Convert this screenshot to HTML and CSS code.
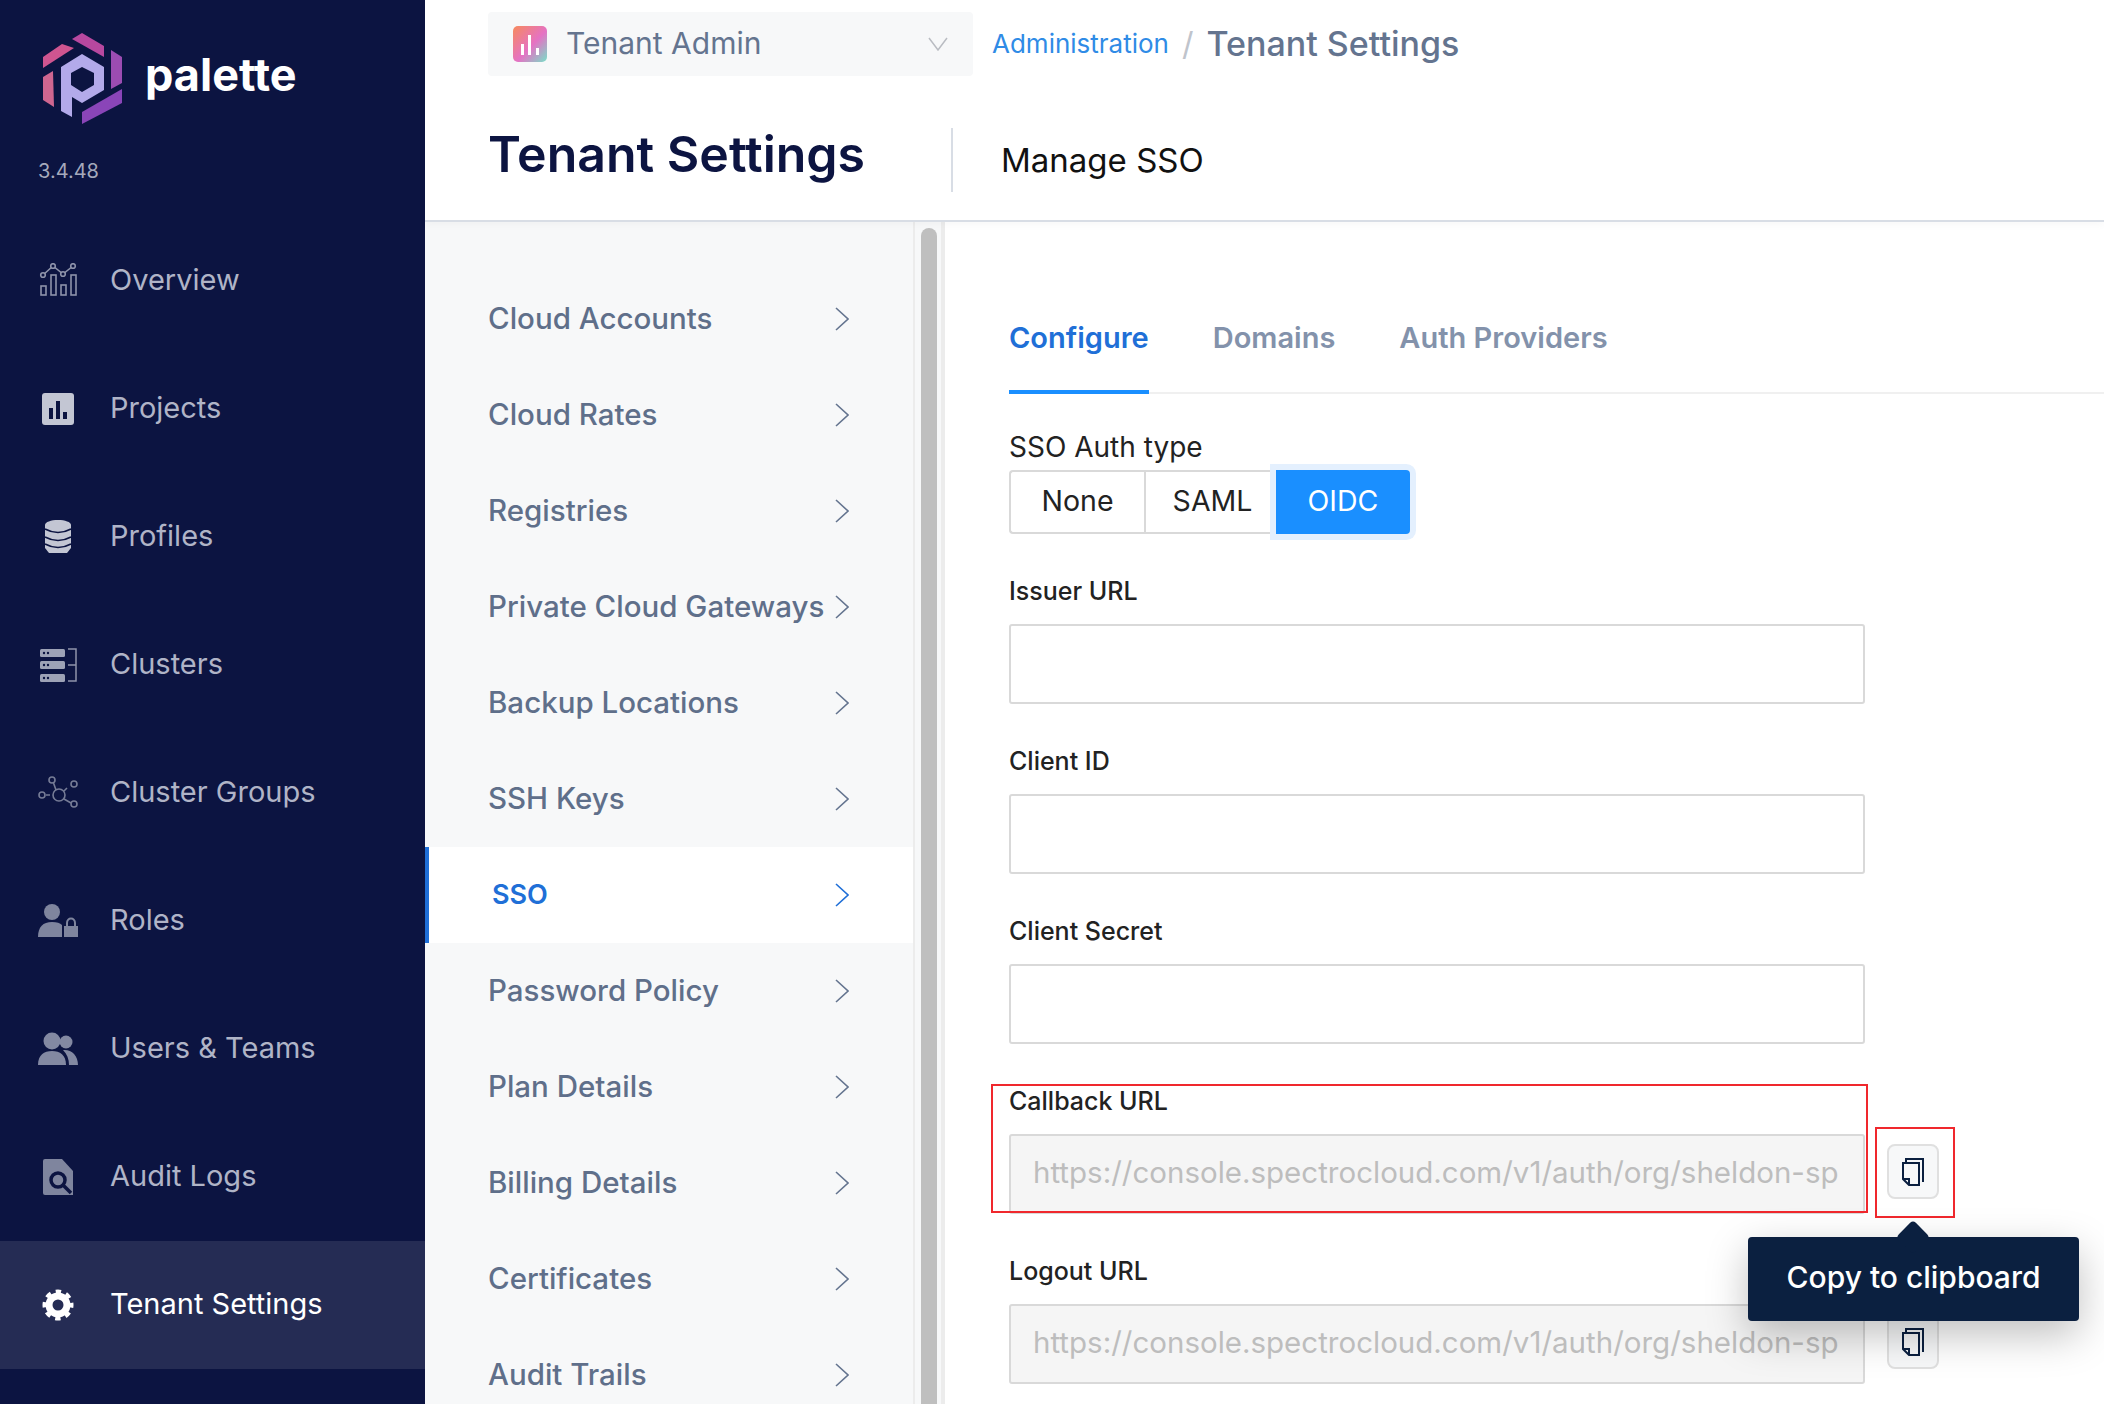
FILE: index.html
```html
<!DOCTYPE html>
<html lang="en">
<head>
    <meta charset="UTF-8">
    <title>Tenant Settings</title>
    <link rel="stylesheet" href="styles.css">
</head>
<body>
    <aside class="sidebar">
        <div class="brand">
            <div class="brand-row">
                <svg class="logo" viewBox="43 33 79 91">
                    <polygon fill="#cf5590" points="43,57 62,44 74,48 43,68"/>
                    <polygon fill="#b8489f" points="72,39 82,33 104,46 104,57"/>
                    <polygon fill="#9c4cb2" points="111,50 122,57 122,83 111,89"/>
                    <polygon fill="#8a45b8" points="122,89 122,103 82,124 82,112"/>
                    <polygon fill="#cf6690" points="53,71 43,77 43,100 54,107"/>
                    <path fill="#b3aaea" fill-rule="evenodd" d="M82 54 L104 67 V90 L82 103 L72 97 V117 L61 111 V67 Z M82 67 L71 73 V85 L82 92 L94 85 V73 Z"/>
                </svg>
                <span class="brand-name">palette</span>
            </div>
            <div class="version">3.4.48</div>
        </div>
        <nav>
            <a class="nav-item">
                <svg class="nav-icon" viewBox="0 0 40 36" fill="none" stroke="#8e93aa" stroke-width="1.6">
                    <rect x="3" y="23" width="5" height="9"/><rect x="13" y="12" width="5" height="20"/><rect x="23" y="22" width="5" height="10"/><rect x="33" y="12" width="5" height="20"/>
                    <path d="M5 12 L15 3 L25 11 L35 3"/>
                    <circle cx="5" cy="12" r="2.3" fill="#0c1441"/><circle cx="15" cy="3" r="2.3" fill="#0c1441"/><circle cx="25" cy="11" r="2.3" fill="#0c1441"/><circle cx="35" cy="3" r="2.3" fill="#0c1441"/>
                </svg>
                Overview
            </a>
            <a class="nav-item">
                <svg class="nav-icon" viewBox="0 0 40 36">
                    <rect x="4" y="2" width="32" height="32" rx="3" fill="#c3c6d3"/>
                    <rect x="11" y="17" width="4" height="11" fill="#0c1441"/><rect x="18" y="10" width="4" height="18" fill="#0c1441"/><rect x="25" y="21" width="4" height="7" fill="#0c1441"/>
                </svg>
                Projects
            </a>
            <a class="nav-item">
                <svg class="nav-icon" viewBox="0 0 40 36">
                    <path fill="#c3c6d3" d="M7 6 C7 3 13 1 20 1 C27 1 33 3 33 6 V29 L29 34 H11 L7 29 Z"/>
                    <path fill="none" stroke="#0c1441" stroke-width="1.6" d="M7 10 Q20 17 33 10 M7 18 Q20 25 33 18 M7 25 Q20 32 33 25"/>
                </svg>
                Profiles
            </a>
            <a class="nav-item">
                <svg class="nav-icon" viewBox="0 0 40 36">
                    <g fill="#9da2b6">
                        <rect x="2" y="2" width="25" height="8" rx="1.5"/><rect x="2" y="14" width="25" height="8" rx="1.5"/><rect x="2" y="27" width="25" height="8" rx="1.5"/>
                    </g>
                    <g fill="#0c1441">
                        <circle cx="6" cy="6" r="1.2"/><circle cx="10" cy="6" r="1.2"/><circle cx="6" cy="18" r="1.2"/><circle cx="10" cy="18" r="1.2"/><circle cx="6" cy="31" r="1.2"/><circle cx="10" cy="31" r="1.2"/>
                    </g>
                    <path d="M30 2 H38 V34 H30 M30 18 H38" fill="none" stroke="#8e93aa" stroke-width="1.5"/>
                </svg>
                Clusters
            </a>
            <a class="nav-item">
                <svg class="nav-icon" viewBox="0 0 40 36" fill="none" stroke="#767c96" stroke-width="1.6">
                    <circle cx="21" cy="20" r="6"/><circle cx="14" cy="5" r="3"/><circle cx="36" cy="9" r="3"/><circle cx="4" cy="20" r="3"/><circle cx="36" cy="29" r="3"/>
                    <path d="M15.500 8 L18 15 M29 13 L26 16 M8 20 H12 M26 24 L33 28"/>
                </svg>
                Cluster Groups
            </a>
            <a class="nav-item">
                <svg class="nav-icon" viewBox="0 0 40 36" fill="#7f859e">
                    <circle cx="14" cy="9" r="8"/>
                    <path d="M0 34 C0 24 5 19 14 19 C19 19 22 20 24 22 V34 Z"/>
                    <path d="M26 34 V23 H40 V34 Z"/>
                    <path d="M29 23 V20 C29 14 37 14 37 20 V23" fill="none" stroke="#7f859e" stroke-width="2"/>
                </svg>
                Roles
            </a>
            <a class="nav-item">
                <svg class="nav-icon" viewBox="0 0 40 36" fill="#8389a2">
                    <circle cx="14" cy="10" r="8.500"/><circle cx="28" cy="11" r="6.500"/>
                    <path d="M0 34 C0 24 6 20 14 20 C22 20 28 24 28 34 Z"/>
                    <path d="M25 19 C33 18 40 24 40 34 H31 C31 28 29 23 25 19 Z"/>
                </svg>
                Users &amp; Teams
            </a>
            <a class="nav-item">
                <svg class="nav-icon" viewBox="0 0 40 36">
                    <path d="M5 2 Q5 0 7 0 H24 L35 12 V36 H7 Q5 36 5 34 Z" fill="#7f859e"/>
                    <circle cx="20" cy="21" r="7" fill="none" stroke="#0c1441" stroke-width="3.500"/>
                    <path d="M25 26 L33 34" stroke="#0c1441" stroke-width="3.500"/>
                </svg>
                Audit Logs
            </a>
            <a class="nav-item active">
                <svg class="nav-icon" viewBox="0 0 40 36" fill="none" stroke="#fff">
                    <circle cx="20" cy="18" r="9" stroke-width="7"/>
                    <circle cx="20" cy="18" r="13" stroke-width="5" stroke-dasharray="5.200 5.010" stroke-dashoffset="2.600"/>
                </svg>
                Tenant Settings
            </a>
        </nav>
    </aside>

    <div class="main">
        <header class="header">
            <div class="top-row">
                <div class="scope-select">
                    <svg class="scope-icon" viewBox="0 0 34 36">
                        <defs>
                            <linearGradient id="scopeFill" x1="0" y1="0" x2="1" y2="1">
                                <stop offset="0" stop-color="#f78a5c"/>
                                <stop offset="0.55" stop-color="#e572c4"/>
                                <stop offset="1" stop-color="#78e0c8"/>
                            </linearGradient>
                        </defs>
                        <rect width="34" height="36" rx="5" fill="url(#scopeFill)"/>
                        <rect x="8" y="18" width="3" height="11" fill="#fff"/><rect x="15" y="9" width="3" height="20" fill="#fff"/><rect x="23" y="22" width="3" height="7" fill="#fff"/>
                    </svg>
                    <span class="scope-name">Tenant Admin</span>
                    <svg class="scope-caret" viewBox="0 0 20 14" fill="none" stroke="#b9bcc2" stroke-width="1.5"><path d="M1 1 L10 13 L19 1"/></svg>
                </div>
                <div class="breadcrumb">
                    <a class="crumb-link">Administration</a>
                    <span class="crumb-sep">/</span>
                    <span class="crumb-current">Tenant Settings</span>
                </div>
            </div>
            <div class="title-row">
                <h1>Tenant Settings</h1>
                <div class="title-sub">Manage SSO</div>
            </div>
        </header>

        <div class="content">
            <ul class="settings-menu">
                <li>Cloud Accounts <svg class="chev" viewBox="0 0 14 24"><path d="M1 1 L13 12 L1 23"/></svg></li>
                <li>Cloud Rates <svg class="chev" viewBox="0 0 14 24"><path d="M1 1 L13 12 L1 23"/></svg></li>
                <li>Registries <svg class="chev" viewBox="0 0 14 24"><path d="M1 1 L13 12 L1 23"/></svg></li>
                <li>Private Cloud Gateways <svg class="chev" viewBox="0 0 14 24"><path d="M1 1 L13 12 L1 23"/></svg></li>
                <li>Backup Locations <svg class="chev" viewBox="0 0 14 24"><path d="M1 1 L13 12 L1 23"/></svg></li>
                <li>SSH Keys <svg class="chev" viewBox="0 0 14 24"><path d="M1 1 L13 12 L1 23"/></svg></li>
                <li class="selected">SSO <svg class="chev" viewBox="0 0 14 24"><path d="M1 1 L13 12 L1 23"/></svg></li>
                <li>Password Policy <svg class="chev" viewBox="0 0 14 24"><path d="M1 1 L13 12 L1 23"/></svg></li>
                <li>Plan Details <svg class="chev" viewBox="0 0 14 24"><path d="M1 1 L13 12 L1 23"/></svg></li>
                <li>Billing Details <svg class="chev" viewBox="0 0 14 24"><path d="M1 1 L13 12 L1 23"/></svg></li>
                <li>Certificates <svg class="chev" viewBox="0 0 14 24"><path d="M1 1 L13 12 L1 23"/></svg></li>
                <li>Audit Trails <svg class="chev" viewBox="0 0 14 24"><path d="M1 1 L13 12 L1 23"/></svg></li>
            </ul>
            <div class="menu-scroll"><div class="menu-thumb"></div></div>

            <section class="panel">
                <div class="tabs">
                    <a class="tab active">Configure</a>
                    <a class="tab">Domains</a>
                    <a class="tab">Auth Providers</a>
                </div>

                <div class="auth-label">SSO Auth type</div>
                <div class="radio-group">
                    <span class="radio">None</span>
                    <span class="radio">SAML</span>
                    <span class="radio checked">OIDC</span>
                </div>

                <div class="field">
                    <label for="issuer">Issuer URL</label>
                    <div class="field-row"><input type="text" id="issuer"></div>
                </div>
                <div class="field">
                    <label for="clientId">Client ID</label>
                    <div class="field-row"><input type="text" id="clientId"></div>
                </div>
                <div class="field">
                    <label for="clientSecret">Client Secret</label>
                    <div class="field-row"><input type="text" id="clientSecret"></div>
                </div>
                <div class="field annotated">
                    <label for="callback">Callback URL</label>
                    <div class="field-row">
                        <input type="text" id="callback" disabled value="https://console.spectrocloud.com/v1/auth/org/sheldon-spectrocloud/oidc/callback">
                        <button class="copy-btn" type="button">
                            <svg viewBox="0 0 22 28" fill="none" stroke="#0b2040" stroke-width="2"><path d="M4 4 V1 H21 V24"/><path d="M1 5 H17 V27 H7 L1 21 Z"/><path d="M1 21 H7 V27"/></svg>
                        </button>
                    </div>
                    <div class="mark mark-field"></div>
                    <div class="mark mark-button"></div>
                    <div class="tooltip">Copy to clipboard</div>
                </div>
                <div class="field">
                    <label for="logout">Logout URL</label>
                    <div class="field-row">
                        <input type="text" id="logout" disabled value="https://console.spectrocloud.com/v1/auth/org/sheldon-spectrocloud/oidc/logout">
                        <button class="copy-btn" type="button">
                            <svg viewBox="0 0 22 28" fill="none" stroke="#0b2040" stroke-width="2"><path d="M4 4 V1 H21 V24"/><path d="M1 5 H17 V27 H7 L1 21 Z"/><path d="M1 21 H7 V27"/></svg>
                        </button>
                    </div>
                </div>
            </section>
        </div>
    </div>
</body>
</html>
```

FILE: styles.css
```css
* {
    box-sizing: border-box;
}

html, body {
    height: 100%;
    overflow: hidden;
}

body {
    margin: 0;
    display: flex;
    background-color: #fff;
    font-family: Inter, "Noto Sans", sans-serif;
    color: #222;
}

/* sidebar */
.sidebar {
    width: 425px;
    flex: none;
    background-color: #0c1441;
}

.brand {
    height: 217px;
    padding: 33px 0 0 38px;
}

.brand-row {
    display: flex;
    align-items: center;
    padding-left: 5px;
}

.logo {
    width: 79px;
    height: 91px;
}

.brand-name {
    margin: 0 0 8px 23px;
    font-size: 45px;
    font-weight: 700;
    color: #fff;
}

.version {
    margin-top: 35px;
    font-size: 20px;
    color: #a5a9bb;
}

.nav-item {
    display: flex;
    align-items: center;
    height: 128px;
    padding: 0 0 3px 38px;
    font-size: 29px;
    color: #b0b4c7;
}

.nav-item.active {
    background-color: #252c54;
    color: #fff;
}

.nav-icon {
    width: 40px;
    height: 36px;
    margin: 3px 32px 0 0;
    flex: none;
}

/* header */
.main {
    flex: 1;
    min-width: 0;
    display: flex;
    flex-direction: column;
}

.header {
    position: relative;
    height: 222px;
    flex: none;
    padding: 12px 0 0 63px;
    border-bottom: 2px solid #d8dde5;
    box-shadow: 0 3px 8px rgba(0, 0, 0, 0.03);
}

.top-row {
    display: flex;
    align-items: center;
}

.scope-select {
    display: flex;
    align-items: center;
    width: 485px;
    height: 64px;
    padding: 0 25px;
    background-color: #f7f8f9;
    border-radius: 4px;
}

.scope-icon {
    width: 34px;
    height: 36px;
    flex: none;
}

.scope-name {
    flex: 1;
    margin: 0 0 2px 19px;
    font-size: 30px;
    color: #64748f;
}

.scope-caret {
    width: 20px;
    height: 14px;
}

.breadcrumb {
    display: flex;
    align-items: center;
    margin-left: 19px;
    padding-bottom: 2px;
}

.crumb-link {
    font-size: 26px;
    color: #2f8be6;
}

.crumb-sep {
    margin: 0 13px;
    font-size: 32px;
    color: #bfc4cc;
}

.crumb-current {
    font-size: 34px;
    font-weight: 500;
    color: #64748f;
}

.title-row {
    display: flex;
    align-items: center;
    height: 64px;
    margin-top: 52px;
}

h1 {
    width: 465px;
    height: 64px;
    margin: 0;
    font-size: 50px;
    line-height: 52px;
    font-weight: 600;
    color: #0c1441;
    border-right: 2px solid #d8dde5;
}

.title-sub {
    margin: 0 0 0 48px;
    font-size: 33px;
    color: #111;
}

/* settings menu */
.content {
    flex: 1;
    display: flex;
    min-height: 0;
}

.settings-menu {
    width: 488px;
    flex: none;
    margin: 0;
    padding: 49px 0 0;
    list-style: none;
    background-color: #f7f8f9;
}

.settings-menu li {
    display: flex;
    align-items: center;
    justify-content: space-between;
    height: 96px;
    padding: 0 64px 2px 63px;
    font-size: 29.500px;
    font-weight: 500;
    color: #5f6f8a;
    white-space: nowrap;
}

.settings-menu li.selected {
    padding-left: 63px;
    background-color: #fff;
    border-left: 4px solid #206fd7;
    color: #206fd7;
    font-size: 27px;
    font-weight: 600;
}

.chev {
    width: 14px;
    height: 24px;
    margin-top: 2px;
    flex: none;
    fill: none;
    stroke: #64748f;
    stroke-width: 1.6;
}

.selected .chev {
    stroke: #206fd7;
}

.menu-scroll {
    width: 32px;
    flex: none;
    padding: 6px 6px 0;
    background-color: #f7f8f9;
    border-left: 2px solid #ececec;
    border-right: 4px solid #ececec;
}

.menu-thumb {
    width: 16px;
    height: 100%;
    background-color: #bfbfbf;
    border-radius: 8px 8px 0 0;
}

/* form panel */
.panel {
    flex: 1;
    min-width: 0;
    padding: 92px 0 0 64px;
}

.tabs {
    display: flex;
    gap: 64px;
    height: 80px;
    border-bottom: 2px solid #f0f0f0;
    margin-bottom: 36px;
}

.tab {
    height: 80px;
    padding-top: 1px;
    font-size: 29px;
    line-height: 46px;
    font-weight: 600;
    color: #8392ab;
}

.tab.active {
    color: #206fd7;
    border-bottom: 4px solid #1a8fff;
}

.auth-label {
    height: 34px;
    font-size: 28px;
    line-height: 34px;
    margin-bottom: 6px;
}

.radio-group {
    display: flex;
    width: 401px;
    height: 64px;
    margin-bottom: 40px;
}

.radio {
    width: 135px;
    display: flex;
    align-items: center;
    justify-content: center;
    padding-bottom: 3px;
    font-size: 28.500px;
    border: 2px solid #d9d9d9;
    border-right: 0;
}

.radio:first-child {
    border-radius: 4px 0 0 4px;
}

.radio.checked {
    width: 134px;
    margin-left: -3px;
    background-color: #1a8fff;
    border: 0;
    border-radius: 0 4px 4px 0;
    color: #fff;
    box-shadow: 0 0 0 6px #e4f0fe;
}

.field {
    position: relative;
    height: 170px;
}

.field label {
    display: block;
    height: 34px;
    margin-bottom: 16px;
    font-size: 25px;
    line-height: 34px;
    font-weight: 500;
}

.field-row {
    display: flex;
    align-items: center;
}

.field input {
    width: 856px;
    height: 80px;
    padding: 0 24px 5px 22px;
    font-family: inherit;
    font-size: 29.500px;
    background-color: #fff;
    border: 2px solid #d9d9d9;
    border-radius: 3px;
    outline: none;
}

.field input:disabled {
    background-color: #f5f5f5;
    color: #bdbdbd;
    -webkit-text-fill-color: #bdbdbd;
}

.copy-btn {
    display: flex;
    align-items: center;
    justify-content: center;
    width: 52px;
    height: 55px;
    margin: 0 0 5px 22px;
    padding: 0;
    background-color: #f7f8f9;
    border: 2px solid #e0e0e0;
    border-radius: 8px;
}

.copy-btn svg {
    width: 22px;
    height: 28px;
}

/* red annotation boxes and the tooltip lie over the fields */
.mark {
    position: absolute;
    border: 2px solid #f0282d;
}

.mark-field {
    left: -18px;
    top: 0;
    width: 877px;
    height: 129px;
}

.mark-button {
    left: 866px;
    top: 43px;
    width: 80px;
    height: 91px;
}

.tooltip {
    position: absolute;
    z-index: 2;
    left: 739px;
    top: 153px;
    width: 331px;
    height: 84px;
    display: flex;
    align-items: center;
    justify-content: center;
    padding-bottom: 5px;
    background-color: #0b2040;
    border-radius: 4px;
    color: #fff;
    font-size: 30px;
    font-weight: 500;
    box-shadow: 0 14px 40px rgba(0, 0, 0, 0.25);
}

.tooltip::before {
    content: "";
    position: absolute;
    left: 153px;
    top: -12px;
    width: 24px;
    height: 24px;
    background-color: #0b2040;
    border-radius: 4px;
    transform: rotate(45deg);
}
```
